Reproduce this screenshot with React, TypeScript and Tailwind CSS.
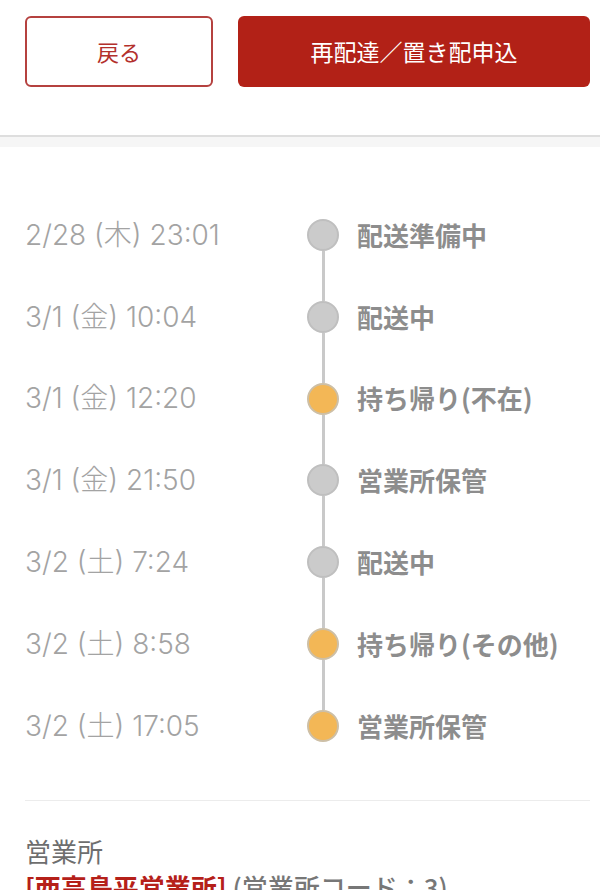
import React from "react";

const rows = [
  { date: "2/28 (木) 23:01", status: "配送準備中", orange: false },
  { date: "3/1 (金) 10:04", status: "配送中", orange: false },
  { date: "3/1 (金) 12:20", status: "持ち帰り(不在)", orange: true },
  { date: "3/1 (金) 21:50", status: "営業所保管", orange: false },
  { date: "3/2 (土) 7:24", status: "配送中", orange: false },
  { date: "3/2 (土) 8:58", status: "持ち帰り(その他)", orange: true },
  { date: "3/2 (土) 17:05", status: "営業所保管", orange: true },
];

export default function App() {
  return (
    <div
      className="w-[600px] h-[890px] overflow-hidden bg-white"
      style={{ fontFamily: '"Noto Sans CJK JP", "Noto Sans", sans-serif' }}
    >
      <div className="flex gap-[25px] pl-[25px] pr-[10px] pt-[16px] pb-[48px] border-b-2 border-[#dedede]">
        <button className="w-[188px] h-[71px] rounded-[6px] border-2 border-[#b5413f] bg-white text-[#b3302c] text-[22px] flex items-center justify-center">
          戻る
        </button>
        <button className="flex-1 h-[71px] rounded-[6px] bg-[#b22117] text-white text-[23px] flex items-center justify-center">
          再配達／置き配申込
        </button>
      </div>
      <div className="h-[10px] bg-[#f6f6f6]" />
      <div className="pt-[47px] pl-[25px] pr-[10px]">
        {rows.map((r, i) => (
          <div key={i} className="flex items-stretch h-[81.8px]">
            <div
              className="w-[282px] flex items-center text-[28px] font-light text-[#a3a3a3] leading-none"
              style={{ fontFamily: 'Inter, "Noto Sans CJK JP", sans-serif' }}
            >
              {r.date}
            </div>
            <div className="w-[32px] flex flex-col items-center">
              <div
                className={`flex-1 w-[3px] ${i === 0 ? "bg-transparent" : "bg-[#c9c9c9]"}`}
              />
              <div
                className={`w-[32px] h-[32px] rounded-full border-2 ${
                  r.orange
                    ? "bg-[#f3b756] border-[#cdbfa6]"
                    : "bg-[#cbcbcb] border-[#bfbfbf]"
                }`}
              />
              <div
                className={`flex-1 w-[3px] ${
                  i === rows.length - 1 ? "bg-transparent" : "bg-[#c9c9c9]"
                }`}
              />
            </div>
            <div className="pl-[18px] flex items-center text-[26px] font-semibold text-[#8d8d8d] leading-none">
              {r.status}
            </div>
          </div>
        ))}
        <div className="mt-[33px] border-t border-[#ececec]" />
        <div className="pt-[32px] text-[26px] leading-[36px] text-[#6e6e6e]">
          営業所
        </div>
        <div className="text-[26px] leading-[36px] whitespace-nowrap">
          <span className="font-bold text-[#b52019]">[西高島平営業所]</span>
          <span className="text-[#777777] font-medium"> (営業所コード：3)</span>
        </div>
      </div>
    </div>
  );
}
